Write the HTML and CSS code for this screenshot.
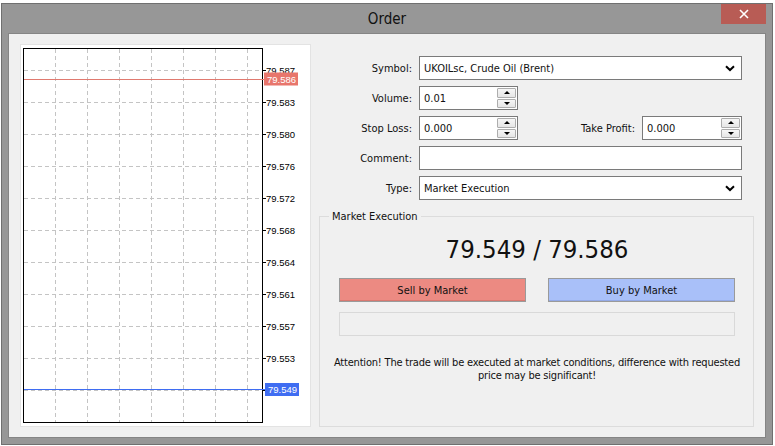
FILE: index.html
```html
<!DOCTYPE html>
<html>
<head>
<meta charset="utf-8">
<title>Order</title>
<link rel="stylesheet" href="styles.css">
</head>
<body>
<div class="window">
  <div class="titlebar">
    <span class="title">Order</span>
    <div class="close">
      <svg width="10" height="10" viewBox="0 0 10 10"><path d="M1 1 L9 9 M9 1 L1 9" stroke="#fff" stroke-width="1.6" fill="none"/></svg>
    </div>
  </div>
  <div class="client">
    <div class="chart">
      <svg width="289" height="381" viewBox="0 0 289 381">
        <g class="grid">
          <path d="M34.5 4V377 M66.5 4V377 M98.5 4V377 M130.5 4V377 M162.5 4V377 M194.5 4V377 M226.5 4V377"/>
          <path d="M3 25.5H241 M3 57.5H241 M3 89.5H241 M3 121.5H241 M3 153.5H241 M3 185.5H241 M3 217.5H241 M3 249.5H241 M3 281.5H241 M3 313.5H241 M3 345.5H241"/>
        </g>
        <rect x="2.5" y="3.5" width="239" height="374" fill="none" stroke="#000" stroke-width="1"/>
        <path class="ticks" d="M241 25.5H245 M241 57.5H245 M241 89.5H245 M241 121.5H245 M241 153.5H245 M241 185.5H245 M241 217.5H245 M241 249.5H245 M241 281.5H245 M241 313.5H245 M241 345.5H245"/>
        <g class="axis">
          <text x="245" y="28.5">79.587</text>
          <text x="245" y="61">79.583</text>
          <text x="245" y="93">79.580</text>
          <text x="245" y="125">79.576</text>
          <text x="245" y="157">79.572</text>
          <text x="245" y="189">79.568</text>
          <text x="245" y="221">79.564</text>
          <text x="245" y="253">79.561</text>
          <text x="245" y="285">79.557</text>
          <text x="245" y="317">79.553</text>
        </g>
        <path d="M3 34.5H243" stroke="#e07a70" stroke-width="1"/>
        <rect x="243" y="27.5" width="34" height="13" fill="#e8766c"/>
        <text class="tag" x="246" y="38">79.586</text>
        <path d="M3 344.5H244" stroke="#3f6df2" stroke-width="1"/>
        <rect x="244" y="338" width="34" height="13" fill="#3f6df2"/>
        <text class="tag" x="247" y="348">79.549</text>
      </svg>
    </div>
    <div class="side">
      <div class="form">
        <span class="lbl">Symbol:</span>
        <div class="field span3">
          <span class="val">UKOILsc, Crude Oil (Brent)</span>
          <svg class="chev" width="10" height="7" viewBox="0 0 10 7"><path d="M1 1.2 L5 5 L9 1.2" stroke="#000" stroke-width="2" fill="none"/></svg>
        </div>

        <span class="lbl">Volume:</span>
        <div class="field">
          <span class="val">0.01</span>
          <div class="spin"><span class="up"></span><span class="down"></span></div>
        </div>
        <span></span><span></span>

        <span class="lbl">Stop Loss:</span>
        <div class="field">
          <span class="val">0.000</span>
          <div class="spin"><span class="up"></span><span class="down"></span></div>
        </div>
        <span class="lbl">Take Profit:</span>
        <div class="field">
          <span class="val">0.000</span>
          <div class="spin"><span class="up"></span><span class="down"></span></div>
        </div>

        <span class="lbl">Comment:</span>
        <div class="field span3"></div>

        <span class="lbl">Type:</span>
        <div class="field span3">
          <span class="val">Market Execution</span>
          <svg class="chev" width="10" height="7" viewBox="0 0 10 7"><path d="M1 1.2 L5 5 L9 1.2" stroke="#000" stroke-width="2" fill="none"/></svg>
        </div>
      </div>

      <fieldset class="group">
        <legend>Market Execution</legend>
        <div class="group-body">
          <div class="price">79.549 / 79.586</div>
          <div class="actions">
            <div class="btn sell">Sell by Market</div>
            <div class="btn buy">Buy by Market</div>
          </div>
          <div class="progress"></div>
          <div class="note">Attention! The trade will be executed at market conditions, difference with requested<br>price may be significant!</div>
        </div>
      </fieldset>
    </div>
  </div>
</div>
</body>
</html>
```
FILE: styles.css
```css
body {
  margin: 0;
  background: #ffffff;
  font-family: "DejaVu Sans Condensed", "DejaVu Sans", sans-serif;
  font-stretch: semi-condensed;
  font-size: 11px;
  color: #111;
}

.window {
  margin: 3px 0 0 1px;
  width: 772px;
  height: 442px;
  box-sizing: border-box;
  border: 1px solid #707070;
  background: #979797;
  padding: 0 6px 6px 6px;
  display: flex;
  flex-direction: column;
}

.titlebar {
  height: 29px;
  flex: none;
  display: grid;
  grid-template-columns: 1fr auto 1fr;
  align-items: center;
}

.title {
  grid-column: 2;
  font-size: 15px;
  color: #111;
}

.close {
  grid-column: 3;
  justify-self: end;
  align-self: start;
  width: 45px;
  height: 20px;
  background: #b85c55;
  display: flex;
  align-items: center;
  justify-content: center;
}

.close svg { display: block; }

.client {
  flex: 1;
  box-sizing: border-box;
  border: 1px solid #858585;
  background: #f0f0f0;
  display: flex;
  padding: 10px 11px 10px 11px;
}

.chart {
  width: 291px;
  height: 383px;
  flex: none;
  box-sizing: border-box;
  border: 1px solid #e3e3e3;
  background: #fff;
}

.chart svg { display: block; }

.grid path {
  stroke: #c4c4c4;
  stroke-width: 1;
  stroke-dasharray: 4 3;
  fill: none;
}

.ticks {
  stroke: #000;
  stroke-width: 1;
}

.axis text {
  font-family: "Liberation Sans", sans-serif;
  font-size: 9.5px;
  fill: #000;
}

.tag {
  font-family: "Liberation Sans", sans-serif;
  font-size: 9.5px;
  fill: #fff;
}

.side {
  width: 435px;
  margin-left: 8px;
  flex: none;
  display: flex;
  flex-direction: column;
}

.form {
  margin-top: 12px;
  display: grid;
  grid-template-columns: 93px 99px 110px 100px;
  column-gap: 7px;
  row-gap: 6px;
  grid-auto-rows: 24px;
}

.lbl {
  text-align: right;
  align-self: center;
  white-space: nowrap;
}

.field {
  box-sizing: border-box;
  border: 1px solid #7a7a7a;
  background: #fff;
  display: flex;
  align-items: center;
}

.span3 { grid-column: 2 / 5; }

.val {
  flex: 1;
  padding-left: 4px;
  white-space: nowrap;
}

.chev {
  margin-right: 6px;
  display: block;
}

.spin {
  width: 19px;
  align-self: stretch;
  margin: 1px 1px 1px 0;
  display: flex;
  flex-direction: column;
  gap: 1px;
}

.spin span {
  flex: 1;
  box-sizing: border-box;
  border: 1px solid #adadad;
  border-radius: 1px;
  background: linear-gradient(#f6f6f6, #e6e6e6);
  display: flex;
  align-items: center;
  justify-content: center;
}

.spin .up::after {
  content: "";
  border-left: 3px solid transparent;
  border-right: 3px solid transparent;
  border-bottom: 3px solid #000;
}

.spin .down::after {
  content: "";
  border-left: 3px solid transparent;
  border-right: 3px solid transparent;
  border-top: 3px solid #000;
}

.group {
  margin: 10px 0 0;
  padding: 0;
  border: 1px solid #dcdcdc;
  flex: 1;
  min-width: 0;
}

.group legend {
  margin-left: 9px;
  padding: 0 3px;
  line-height: 13px;
  font-size: 11px;
}

.group-body {
  padding: 0 18px 0 19px;
}

.price {
  text-align: center;
  font-size: 25.5px;
  line-height: 30px;
  margin-top: 11px;
  color: #111;
}

.actions {
  display: flex;
  justify-content: space-between;
  margin-top: 14px;
}

.btn {
  width: 187px;
  height: 24px;
  box-sizing: border-box;
  border: 1px solid #9a9a9a;
  display: flex;
  align-items: center;
  justify-content: center;
}

.sell {
  background: #ec8a82;
  box-shadow: inset 0 -1px 0 #d87870;
}

.buy {
  background: #a9c0f9;
  box-shadow: inset 0 -1px 0 #94aae6;
}

.progress {
  height: 24px;
  box-sizing: border-box;
  border: 1px solid #d9d9d9;
  margin-top: 10px;
}

.note {
  margin: 20px -12px 0;
  text-align: center;
  line-height: 13px;
  white-space: nowrap;
  letter-spacing: -0.2px;
}
```
